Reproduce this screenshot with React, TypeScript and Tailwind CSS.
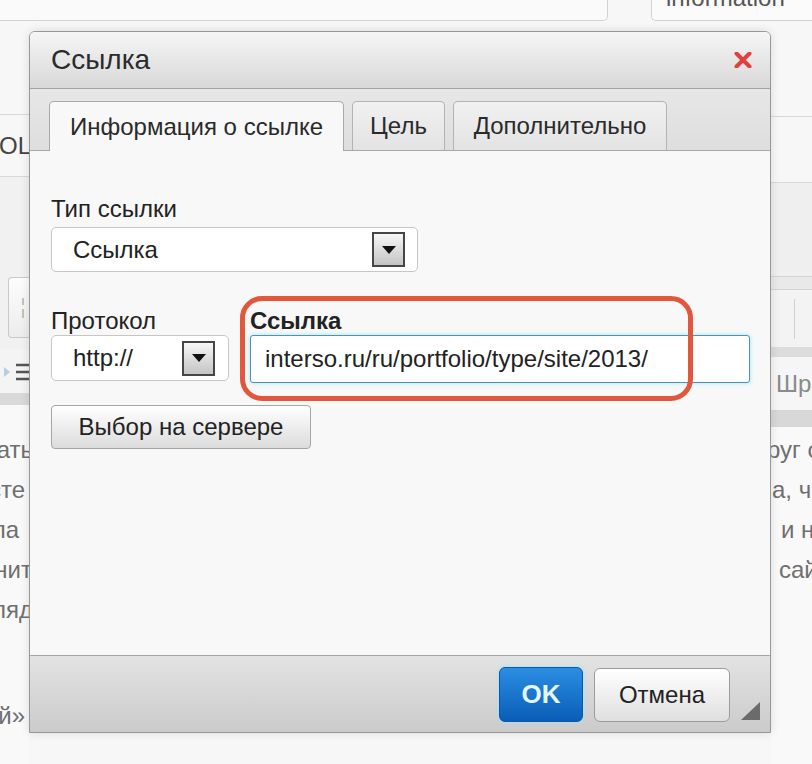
import React from "react";

const DropButton = () => (
  <span className="flex h-[35px] w-[33px] shrink-0 items-center justify-center border-2 border-[#464646] bg-linear-to-b from-[#f7f7f7] to-[#c4c4c4]">
    <svg width="14" height="8" viewBox="0 0 14 8">
      <path d="M0 0h14L7 8z" fill="#111" />
    </svg>
  </span>
);

const leftLines = [
  { text: "казать", cls: "-mr-[4px]" },
  { text: "сте", cls: "mr-[4px]" },
  { text: "ла", cls: "mr-[10px]" },
  { text: "нит", cls: "-mr-[3px]" },
  { text: "ляд", cls: "-mr-[4px]" },
];

const rightLines = [
  { text: "руг с", cls: "-ml-[4px]" },
  { text: "а, ч", cls: "ml-[1px]" },
  { text: "и н", cls: "ml-[10px]" },
  { text: "сай", cls: "ml-[8px]" },
];

const App = () => {
  return (
    <div className="relative flex h-[764px] w-[812px] flex-col overflow-hidden bg-[#f7f7f7] font-['Liberation_Sans',Arial,Helvetica,sans-serif]">
      {/* page behind the dialog */}
      <div className="flex h-[21px] shrink-0">
        <div className="w-[608px] rounded-br-[5px] border-r border-b border-[#d2d2d2] bg-[#fafafa]" />
        <div className="w-[43px]" />
        <div className="flex-1 overflow-hidden rounded-bl-[5px] border-b border-l border-[#d2d2d2] bg-[#fbfbfb]">
          <div className="-mt-[14px] pl-[14px] text-[24px] leading-[24px] text-[#555]">information</div>
        </div>
      </div>

      <div className="flex flex-1">
        <div className="flex w-[29px] flex-col overflow-hidden">
          <div className="h-[94px] border-b border-[#d9d9d9]" />
          <div className="flex h-[62px] items-center border-b border-[#d9d9d9] text-[24px] text-[#444]">
            <span className="-ml-[1px]">OL</span>
          </div>
          <div className="flex h-[173px] flex-col bg-[#f1f1f1] pt-[100px] pl-[8px]">
            <div className="flex h-[61px] items-center justify-end rounded-l-[4px] border border-r-0 border-[#c9c9c9] bg-linear-to-b from-[#fdfdfd] to-[#ececec] pr-[3px]">
              <svg width="4" height="20" viewBox="0 0 4 20">
                <path d="M1 0v7M1 11v9" stroke="#a9b9a0" strokeWidth="1.5" />
              </svg>
            </div>
          </div>
          <div className="flex h-[43px] items-center bg-[#f4f4f4]">
            <svg width="29" height="22" viewBox="0 0 29 22">
              <path d="M4 6l6 5-6 5z" fill="#b8cce6" />
              <path d="M16 4h13M16 11h13M16 18h13" stroke="#555" strokeWidth="2.5" />
            </svg>
          </div>
          <div className="h-[12px] bg-[#d9d9d9]" />
          <div className="flex flex-1 flex-col bg-[#f9f9f9] pt-[25px] text-[24px] leading-[40px] text-[#6f6f6f]">
            {leftLines.map((l) => (
              <div key={l.text} className="flex justify-end whitespace-nowrap">
                <span className={l.cls}>{l.text}</span>
              </div>
            ))}
            <div className="mt-[66px] flex justify-end whitespace-nowrap">
              <span className="mr-[4px]">й»</span>
            </div>
          </div>
        </div>

        <div className="flex-1" />

        <div className="flex w-[41px] flex-col overflow-hidden">
          <div className="h-[96px] border-b border-[#d9d9d9]" />
          <div className="h-[66px] border-b border-[#d9d9d9]" />
          <div className="h-[94px] border-b border-[#d4d4d4] bg-[#efefef]" />
          <div className="h-[13px] border-b border-[#d4d4d4] bg-[#e9e9e9]" />
          <div className="flex h-[57px] items-center bg-[#f3f3f3] pl-[23px]">
            <div className="h-[40px] w-px bg-[#cfcfcf]" />
          </div>
          <div className="h-[10px] bg-[#dcdcdc]" />
          <div className="flex h-[53px] items-center bg-[#f6f6f6] pl-[5px] text-[24px] whitespace-nowrap text-[#8a8a8a]">Шр</div>
          <div className="h-[17px] bg-[#d8d8d8]" />
          <div className="flex flex-1 flex-col bg-[#f9f9f9] pt-[3px] text-[24px] leading-[40px] text-[#6f6f6f]">
            {rightLines.map((l) => (
              <div key={l.text} className="whitespace-nowrap">
                <span className={l.cls}>{l.text}</span>
              </div>
            ))}
          </div>
        </div>
      </div>

      {/* link dialog */}
      <div className="absolute top-[31px] left-[29px] flex h-[702px] w-[742px] flex-col rounded-t-[6px] border border-[#979797] bg-[#f8f8f8] shadow-[0_0_10px_rgba(0,0,0,0.12)]">
        <div className="flex h-[57px] shrink-0 items-center justify-between rounded-t-[5px] border-b border-[#a3a3a3] bg-linear-to-b from-[#f6f6f6] to-[#d8d8d8] pr-[18px] pl-[21px]">
          <span className="text-[28px] text-[#2b2b2b]">Ссылка</span>
          <svg width="18" height="16" viewBox="0 0 18 16">
            <path d="M2.5 1.5l13 13M15.5 1.5l-13 13" stroke="#e0403e" strokeWidth="4" strokeLinecap="round" />
          </svg>
        </div>

        <div className="flex h-[62px] shrink-0 items-end gap-[8px] border-b border-[#a8a8a8] bg-linear-to-b from-[#e7e7e7] to-[#dedede] pl-[19px]">
          <div className="relative -mb-px flex h-[50px] w-[295px] items-center justify-center rounded-t-[5px] border border-b-0 border-[#a9a9a9] bg-[#f8f8f8] text-[24px] text-[#2a2a2a]">
            Информация о ссылке
          </div>
          <div className="flex h-[49px] w-[93px] items-center justify-center rounded-t-[5px] border border-b-0 border-[#b3b3b3] bg-linear-to-b from-[#f1f1f1] to-[#e3e3e3] text-[24px] text-[#2a2a2a]">
            Цель
          </div>
          <div className="flex h-[49px] w-[214px] items-center justify-center rounded-t-[5px] border border-b-0 border-[#b3b3b3] bg-linear-to-b from-[#f1f1f1] to-[#e3e3e3] text-[24px] text-[#2a2a2a]">
            Дополнительно
          </div>
        </div>

        <div className="flex flex-1 flex-col bg-[#f8f8f8] pt-[44px] pr-[20px] pl-[21px] text-[24px] text-[#222]">
          <label className="leading-[28px]">Тип ссылки</label>
          <div className="mt-[4px] flex h-[45px] w-[367px] items-center justify-between rounded-[5px] border border-[#c6c6c6] bg-white pr-[12px] pl-[21px]">
            <span>Ссылка</span>
            <DropButton />
          </div>

          <div className="mt-[35px] flex gap-[21px]">
            <div className="flex w-[178px] flex-col">
              <label className="leading-[28px]">Протокол</label>
              <div className="flex h-[46px] items-center justify-between rounded-[5px] border border-[#c6c6c6] bg-white pr-[13px] pl-[21px]">
                <span>http://</span>
                <DropButton />
              </div>
            </div>
            <div className="flex flex-1 flex-col">
              <label className="leading-[28px] font-bold">Ссылка</label>
              <div className="flex h-[48px] items-center rounded-[3px] border border-[#4d93b6] bg-white pl-[14px] shadow-[0_0_4px_#9ee3f5]">
                interso.ru/ru/portfolio/type/site/2013/
              </div>
            </div>
          </div>

          <button className="mt-[22px] flex h-[44px] w-[260px] items-center justify-center rounded-[4px] border border-[#a6a6a6] bg-linear-to-b from-[#ffffff] to-[#dcdcdc] text-[24px] text-[#222]">
            Выбор на сервере
          </button>
        </div>

        <div className="relative flex h-[77px] shrink-0 items-start justify-end gap-[11px] border-t border-[#a6a6a6] bg-linear-to-b from-[#e3e3e3] to-[#cbcbcb] pt-[11px] pr-[40px]">
          <button className="flex h-[55px] w-[84px] items-center justify-center rounded-[6px] border border-[#0b58a6] bg-linear-to-b from-[#2a8ee2] to-[#0a5db6] text-[26px] font-bold text-[#e6f6ff] shadow-[0_0_4px_#9be6ff]">
            OK
          </button>
          <button className="mt-[1px] flex h-[54px] w-[136px] items-center justify-center rounded-[6px] border border-[#9c9c9c] bg-linear-to-b from-[#ffffff] to-[#dfdfdf] text-[24px] text-[#222]">
            Отмена
          </button>
          <svg className="absolute right-[10px] bottom-[12px]" width="19" height="18" viewBox="0 0 19 18">
            <path d="M19 0v18H0z" fill="#6b6b6b" />
          </svg>
        </div>
      </div>

      {/* annotation around the link field */}
      <div className="pointer-events-none absolute top-[296px] left-[240px] h-[105px] w-[453px] rounded-[22px] border-[5px] border-[#e2573b]" />
    </div>
  );
};

export default App;
